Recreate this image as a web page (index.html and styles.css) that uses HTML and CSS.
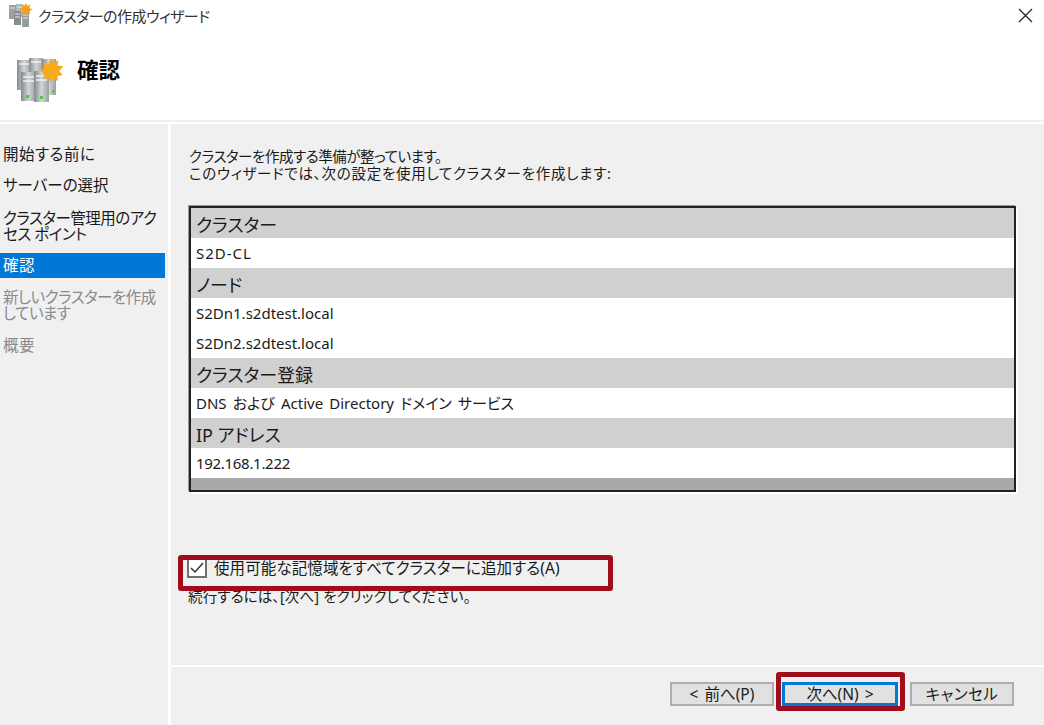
FILE: index.html
```html
<!DOCTYPE html>
<html lang="ja">
<head>
  <meta charset="UTF-8">
  <title>クラスターの作成ウィザード</title>
  <link rel="stylesheet" href="styles.css">
</head>
<body>
  <div class="wizard">
    <div class="titlebar">
      <svg class="title-icon" width="27" height="27" viewBox="0 0 27 27">
        <rect x="2" y="3" width="7" height="14" fill="#9aa0a4"/>
        <rect x="9" y="2" width="7" height="13" fill="#b2b7ba"/>
        <rect x="7" y="9" width="7" height="14" fill="#868c91"/>
        <rect x="15" y="10" width="7" height="15" fill="#979da1"/>
        <path d="M8 12h5M8 15h5M16 13h5M16 16h5M3 6h5M10 5h5" stroke="#e6e9ea" stroke-width="1"/>
        <rect x="9" y="20" width="2" height="2" fill="#4fc23c"/>
        <rect x="18" y="22" width="2" height="2" fill="#4fc23c"/>
        <path d="M19 1l1.500 3 3-1.500-1 3.500 3 1.500-3 1.500 1 3-3.500-1-1 2.500-1.500-2.500-3 1 1-3.500-2.500-1.500 2.500-1.500-1-3 3 1z" fill="#f7a11a"/>
      </svg>
      <span class="title-text">クラスターの作成ウィザード</span>
      <svg class="close-icon" width="15" height="15" viewBox="0 0 15 15">
        <path d="M1 1l13 13M14 1L1 14" stroke="#222" stroke-width="1.200" fill="none"/>
      </svg>
    </div>

    <div class="page-header">
      <svg class="page-icon" width="50" height="46" viewBox="0 0 50 46">
        <defs>
          <linearGradient id="srv" x1="0" x2="1" y1="0" y2="0">
            <stop offset="0" stop-color="#83898d"/>
            <stop offset="0.5" stop-color="#d2d5d7"/>
            <stop offset="1" stop-color="#9a9fa3"/>
          </linearGradient>
        </defs>
        <rect x="1" y="3" width="14" height="30" fill="url(#srv)"/>
        <rect x="13" y="1" width="14" height="30" fill="url(#srv)"/>
        <rect x="26" y="2" width="14" height="36" fill="url(#srv)"/>
        <rect x="5" y="15" width="15" height="29" fill="url(#srv)"/>
        <rect x="18" y="14" width="15" height="31" fill="url(#srv)"/>
        <path d="M7 20h11M7 24h11M20 19h11M20 23h11M3 7h10M15 5h10" stroke="#f0f2f3" stroke-width="1.500"/>
        <rect x="10" y="38" width="3" height="3" fill="#55c243"/>
        <rect x="24" y="39" width="3" height="3" fill="#55c243"/>
        <rect x="36" y="33" width="2" height="3" fill="#55c243"/>
        <path d="M35 1l2.500 5 5-3-1 5.500 6 1-4.500 4.500 4 4-5.500 1 .5 5-5-2.500-2.500 4-2-4.500-5.500 1 1.500-5-4.500-3 4.500-3-1.500-5 5.500 1z" fill="#f8a91c"/>
      </svg>
      <h1 class="page-title">確認</h1>
    </div>

    <div class="content">
      <nav class="steps">
        <div class="step step-wide">開始する前に</div>
        <div class="step">サーバーの選択</div>
        <div class="step step-kana step-wrap">クラスター管理用のアクセス ポイント</div>
        <div class="step step-current">確認</div>
        <div class="step step-kana step-pending step-off">新しいクラスターを作成しています</div>
        <div class="step step-wide step-off">概要</div>
      </nav>

      <main class="pane">
        <div class="pane-body">
          <p class="intro"><span class="intro-first">クラスターを作成する準備が整っています。</span><br><span class="intro-second">このウィザードでは、次の設定を使用してクラスターを作成します:</span></p>

          <div class="summary">
            <div class="row row-head">クラスター</div>
            <div class="row row-wide">S2D-CL</div>
            <div class="row row-head">ノード</div>
            <div class="row">S2Dn1.s2dtest.local</div>
            <div class="row">S2Dn2.s2dtest.local</div>
            <div class="row row-head">クラスター登録</div>
            <div class="row">DNS および Active Directory ドメイン サービス</div>
            <div class="row row-head">IP アドレス</div>
            <div class="row row-tight">192.168.1.222</div>
            <div class="summary-end"></div>
          </div>

          <label class="check-row">
            <span class="check-box">
              <svg width="14" height="12" viewBox="0 0 14 12"><path d="M1 6l4 4 8-9" stroke="#333" stroke-width="1.500" fill="none"/></svg>
            </span>
            使用可能な記憶域をすべてクラスターに追加する(A)
          </label>
          <p class="hint">続行するには、[次へ] をクリックしてください。</p>
          <div class="mark mark-check"></div>
        </div>

        <div class="buttons">
          <button class="btn btn-prev">&lt; 前へ(P)</button>
          <button class="btn btn-next">次へ(N) &gt;</button>
          <button class="btn btn-cancel">キャンセル</button>
          <div class="mark mark-next"></div>
        </div>
      </main>
    </div>
  </div>
</body>
</html>
```

FILE: styles.css
```css
html, body {
  margin: 0;
  padding: 0;
}

body {
  font-family: "Noto Sans", "Noto Sans CJK JP", sans-serif;
  font-feature-settings: "palt";
  background: #fff;
  color: #1a1a1a;
}

.wizard {
  width: 1044px;
  height: 725px;
  display: flex;
  flex-direction: column;
  overflow: hidden;
}

.titlebar {
  height: 36px;
  display: flex;
  align-items: flex-start;
  padding: 2px 11px 0 7px;
  box-sizing: border-box;
}

.title-icon {
  margin-right: 4px;
  filter: blur(0.4px);
}

.page-icon {
  filter: blur(0.5px);
}

.title-text {
  font-size: 15px;
  line-height: 28px;
  letter-spacing: -0.5px;
  color: #333;
}

.close-icon {
  margin-left: auto;
  margin-top: 6px;
}

.page-header {
  height: 86px;
  margin-bottom: 2px;
  display: flex;
  align-items: flex-start;
  padding: 21px 0 0 16px;
  box-sizing: border-box;
  border-bottom: 2px solid #f0f0f0;
}

.page-title {
  margin: -1px 0 0 11px;
  font-size: 21.500px;
  line-height: 28px;
  font-weight: 700;
  color: #000;
}

.content {
  flex: 1;
  display: flex;
  gap: 3px;
  min-height: 0;
}

.steps {
  width: 168px;
  background: #f0f0f0;
  padding-top: 16px;
  box-sizing: border-box;
}

.step {
  width: 165px;
  padding: 6px 3px 7px;
  box-sizing: border-box;
  font-size: 15.500px;
  line-height: 16px;
  margin-bottom: 2px;
}

.step-wide {
  letter-spacing: 0.5px;
}

.step-kana {
  letter-spacing: -0.5px;
}

.step-wrap {
  margin-top: 4px;
  margin-bottom: 3px;
}

.step-current {
  background: #0078d7;
  color: #fff;
  padding: 4px 3px 5px;
  margin-top: 4px;
  margin-bottom: 3px;
  letter-spacing: 0.5px;
}

.step-pending {
  margin-top: 5px;
  margin-bottom: 3px;
}

.step-off {
  color: #8a8a8a;
}

.pane {
  flex: 1;
  background: #f0f0f0;
  display: flex;
  flex-direction: column;
}

.pane-body {
  flex: 1;
  padding: 24px 28px 0 18px;
  position: relative;
}

.intro {
  margin: 0 0 24px;
  font-size: 14.500px;
  line-height: 17px;
}

.intro-first {
  letter-spacing: -0.45px;
}

.intro-second {
  letter-spacing: 0.7px;
}

.summary {
  border: 2px solid #222;
  box-shadow: -1px -1px 0 #9a9a9a, 2px 2px 0 #fff;
  background: #fff;
  height: 282px;
  font-size: 15px;
}

.row {
  height: 30px;
  line-height: 30px;
  padding-left: 5px;
  white-space: nowrap;
  word-spacing: 2.300px;
}

.row-head {
  background: #d0d0d0;
  font-size: 18px;
  line-height: 34px;
  word-spacing: 0;
}

.row-wide {
  letter-spacing: 1px;
}

.row-tight {
  letter-spacing: -0.3px;
}

.summary-end {
  height: 12px;
  background: #a9a9a9;
}

.check-row {
  display: flex;
  align-items: center;
  margin: 65px 0 0 -2px;
  font-size: 15.500px;
  line-height: 22px;
  letter-spacing: 0.1px;
}

.check-box {
  width: 16px;
  height: 16px;
  border: 2px solid #707070;
  background: #fff;
  margin-right: 7px;
  display: flex;
  align-items: center;
  justify-content: center;
}

.hint {
  margin: 9px 0 0 -1px;
  font-size: 14.500px;
  line-height: 17px;
  letter-spacing: 0.15px;
}

.buttons {
  height: 60px;
  border-top: 2px solid #fff;
  box-sizing: border-box;
  display: flex;
  align-items: flex-start;
  padding: 15px 0 0 499px;
  position: relative;
}

.btn {
  height: 24px;
  background: #e1e1e1;
  border: 2px solid #adadad;
  font-family: inherit;
  font-feature-settings: inherit;
  font-size: 15.500px;
  line-height: 18px;
  padding: 0;
  color: #1a1a1a;
  word-spacing: 2px;
}

.btn-prev {
  width: 104px;
}

.btn-next {
  width: 116px;
  margin-left: 8px;
  border: 3px solid #0078d7;
}

.btn-cancel {
  width: 104px;
  margin-left: 12px;
  letter-spacing: 0.5px;
}

.mark {
  position: absolute;
  border: 5px solid #a00d1b;
  border-radius: 3px;
  box-sizing: border-box;
}

.mark-check {
  left: 7px;
  top: 431px;
  width: 435px;
  height: 36px;
}

.mark-next {
  left: 605px;
  top: 5px;
  width: 129px;
  height: 39px;
}
```
